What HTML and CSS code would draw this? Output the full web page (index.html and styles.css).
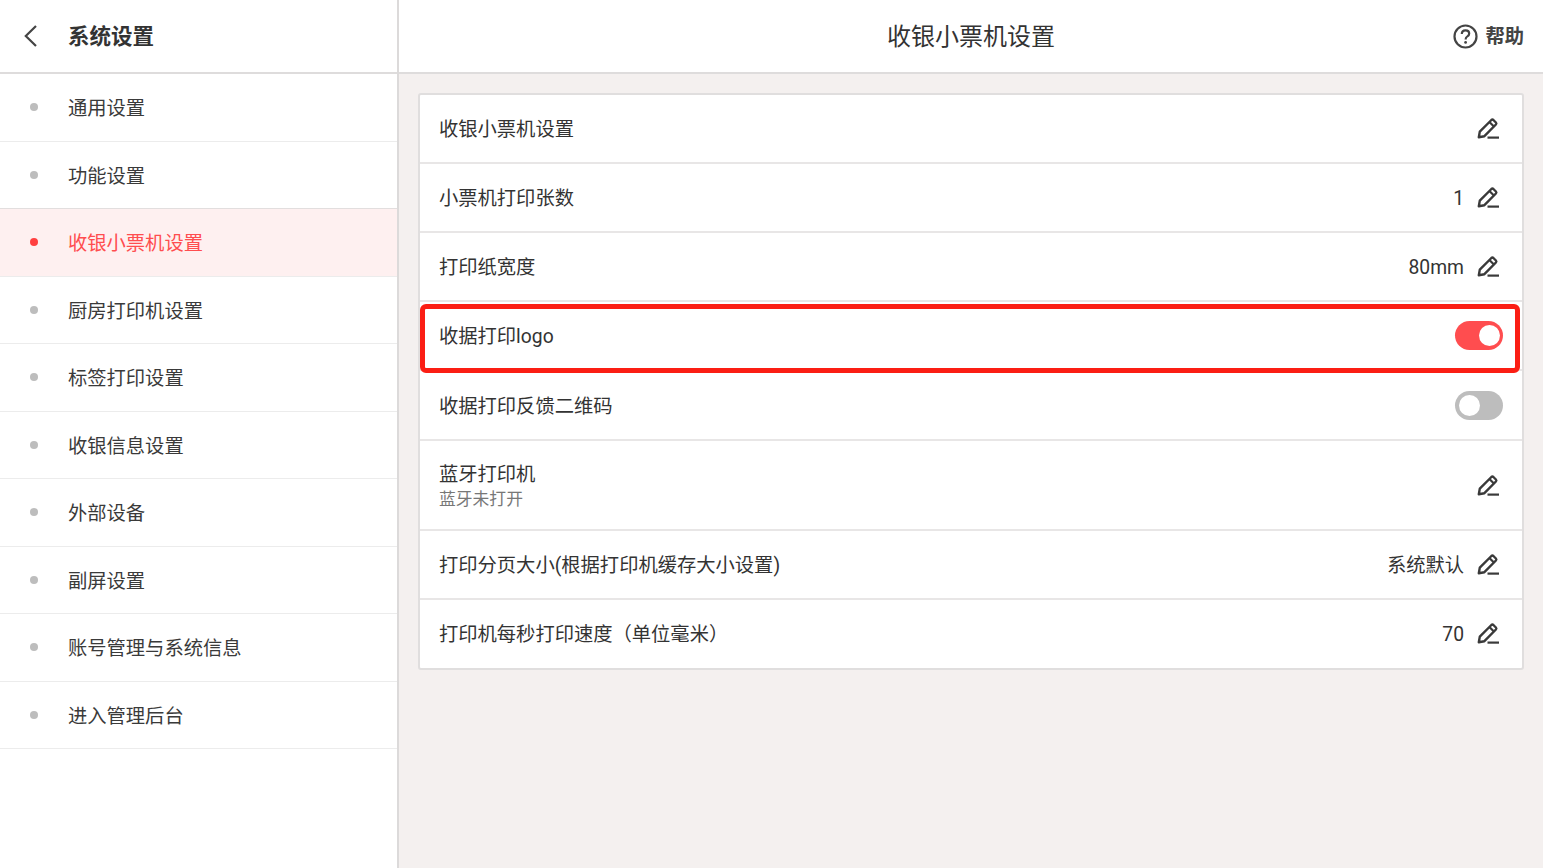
FILE: index.html
```html
<!DOCTYPE html>
<html lang="zh-CN">
<head>
    <meta charset="UTF-8">
    <title>收银小票机设置</title>
    <link rel="stylesheet" href="styles.css">
</head>
<body>
    <svg width="0" height="0" class="defs">
        <symbol id="pen" viewBox="0 0 24 24">
            <path d="M1.8 20.2 L2.8 14.6 L14.4 3 Q15.4 2.1 16.4 3 L18.9 5.5 Q19.8 6.5 18.9 7.5 L7.4 19.2 Z" fill="none" stroke="currentColor" stroke-width="2.4" stroke-linejoin="round"/>
            <path d="M12.4 5 L16.9 9.5" fill="none" stroke="currentColor" stroke-width="2.2"/>
            <path d="M10.5 20.6 H22" fill="none" stroke="currentColor" stroke-width="2.2"/>
        </symbol>
    </svg>

    <aside class="sidebar">
        <div class="side-head">
            <svg class="back" width="16" height="24" viewBox="0 0 16 24">
                <path d="M14 2 L3.8 12 L14 22" fill="none" stroke="currentColor" stroke-width="2.2"/>
            </svg>
            <h1 class="side-title">系统设置</h1>
        </div>
        <ul class="menu">
            <li class="menu-item">通用设置</li>
            <li class="menu-item">功能设置</li>
            <li class="menu-item active">收银小票机设置</li>
            <li class="menu-item">厨房打印机设置</li>
            <li class="menu-item">标签打印设置</li>
            <li class="menu-item">收银信息设置</li>
            <li class="menu-item">外部设备</li>
            <li class="menu-item">副屏设置</li>
            <li class="menu-item">账号管理与系统信息</li>
            <li class="menu-item">进入管理后台</li>
        </ul>
    </aside>

    <main class="main">
        <header class="top">
            <h2 class="top-title">收银小票机设置</h2>
            <div class="help">
                <svg width="25" height="25" viewBox="0 0 25 25">
                    <circle cx="12.5" cy="12.5" r="11" fill="none" stroke="currentColor" stroke-width="2.2"/>
                    <path d="M8.8 10 Q8.8 6.4 12.5 6.4 Q16.2 6.4 16.2 9.6 Q16.2 11.4 14.4 12.4 Q12.6 13.4 12.6 15.4" fill="none" stroke="currentColor" stroke-width="2.2"/>
                    <circle cx="12.6" cy="18.4" r="1.4" fill="currentColor"/>
                </svg>
                <span>帮助</span>
            </div>
        </header>

        <section class="card">
            <div class="row">
                <span class="label">收银小票机设置</span>
                <svg class="pen"><use href="#pen"/></svg>
            </div>
            <div class="row">
                <span class="label">小票机打印张数</span>
                <span class="value">1</span>
                <svg class="pen"><use href="#pen"/></svg>
            </div>
            <div class="row">
                <span class="label">打印纸宽度</span>
                <span class="value">80mm</span>
                <svg class="pen"><use href="#pen"/></svg>
            </div>
            <div class="row marked">
                <span class="label">收据打印logo</span>
                <span class="switch on"></span>
            </div>
            <div class="row wide">
                <span class="label">收据打印反馈二维码</span>
                <span class="switch"></span>
            </div>
            <div class="row tall">
                <div class="label">
                    <div>蓝牙打印机</div>
                    <div class="sub">蓝牙未打开</div>
                </div>
                <svg class="pen"><use href="#pen"/></svg>
            </div>
            <div class="row">
                <span class="label">打印分页大小(根据打印机缓存大小设置)</span>
                <span class="value">系统默认</span>
                <svg class="pen"><use href="#pen"/></svg>
            </div>
            <div class="row">
                <span class="label">打印机每秒打印速度（单位毫米）</span>
                <span class="value">70</span>
                <svg class="pen"><use href="#pen"/></svg>
            </div>
        </section>
    </main>
</body>
</html>
```

FILE: styles.css
```css
* {
    box-sizing: border-box;
}
html, body {
    height: 100%;
}
body {
    display: flex;
    margin: 0;
    overflow: hidden;
    background: #f4f0ef;
    color: #333;
    font-family: Roboto, "Noto Sans CJK SC", sans-serif;
    font-size: 19.3px;
}
.defs {
    position: absolute;
}

/* left column */
.sidebar {
    width: 399px;
    flex: none;
    background: #fff;
    border-right: 2px solid #dcdada;
}
.side-head {
    display: flex;
    align-items: center;
    height: 74px;
    padding-left: 22px;
    border-bottom: 2px solid #dedcdc;
}
.back {
    color: #444;
    margin-top: -1px;
}
.side-title {
    margin: -4px 0 0 30px;
    font-size: 21.5px;
    font-weight: 700;
    color: #333;
}
.menu {
    margin: 0;
    padding: 0;
    list-style: none;
}
.menu-item {
    display: flex;
    align-items: center;
    height: 67.5px;
    padding-left: 30px;
    border-bottom: 1px solid #ececec;
    color: #3a3a3a;
}
.menu-item::before {
    content: "";
    width: 8px;
    height: 8px;
    margin-right: 30px;
    border-radius: 50%;
    background: #bdbdbd;
}
.menu-item.active {
    background: #fef0f0;
    color: #ff4d4f;
    box-shadow: 0 -1px 0 #e2dede;
}
.menu-item.active::before {
    background: #ff4040;
}

/* right column */
.main {
    flex: 1;
    min-width: 0;
}
.top {
    position: relative;
    display: flex;
    align-items: center;
    justify-content: center;
    height: 74px;
    padding-bottom: 4px;
    background: #fff;
    border-bottom: 2px solid #dedcdc;
}
.top-title {
    margin: 0;
    font-size: 24px;
    font-weight: 400;
    color: #333;
}
.help {
    position: absolute;
    right: 19px;
    top: 23px;
    display: flex;
    align-items: center;
    gap: 7px;
    font-weight: 700;
    color: #444;
}
.help span {
    margin-top: -2px;
}
.card {
    margin: 19px 19px 0 19px;
    background: #fff;
    border: 2px solid #e0dede;
    border-radius: 3px;
}
.row {
    position: relative;
    display: flex;
    align-items: center;
    height: 69px;
    padding: 0 22px 0 19px;
    border-bottom: 2px solid #e8e6e6;
    color: #333;
}
.row:last-child {
    height: 68px;
    padding-top: 2px;
    border-bottom-color: transparent;
}
.row.wide {
    height: 70px;
}
.row.wide .label {
    padding-top: 3px;
}
.row.tall {
    height: 90px;
}
.row.tall .pen {
    margin-top: 1px;
}
.row.marked::after {
    content: "";
    position: absolute;
    left: 0;
    right: 2px;
    top: 2px;
    height: 59px;
    border: 5px solid #fb1e14;
    border-radius: 6px;
    box-sizing: content-box;
}
.label {
    flex: 1;
    line-height: 26px;
    padding-top: 2px;
}
.sub {
    font-size: 16.8px;
    line-height: 22px;
    color: #777;
}
.value {
    margin-right: 13px;
    line-height: 26px;
    padding-top: 2px;
}
.pen {
    width: 24px;
    height: 24px;
    margin-right: -1px;
    color: #3a3a3a;
}
.switch {
    position: relative;
    width: 48px;
    height: 29px;
    margin-right: -3px;
    border-radius: 15px;
    background: #bdbdbd;
}
.switch::after {
    content: "";
    position: absolute;
    left: 4px;
    top: 4px;
    width: 21px;
    height: 21px;
    border-radius: 50%;
    background: #fff;
}
.switch.on {
    background: #ff4d4f;
}
.switch.on::after {
    left: 24px;
}
```
